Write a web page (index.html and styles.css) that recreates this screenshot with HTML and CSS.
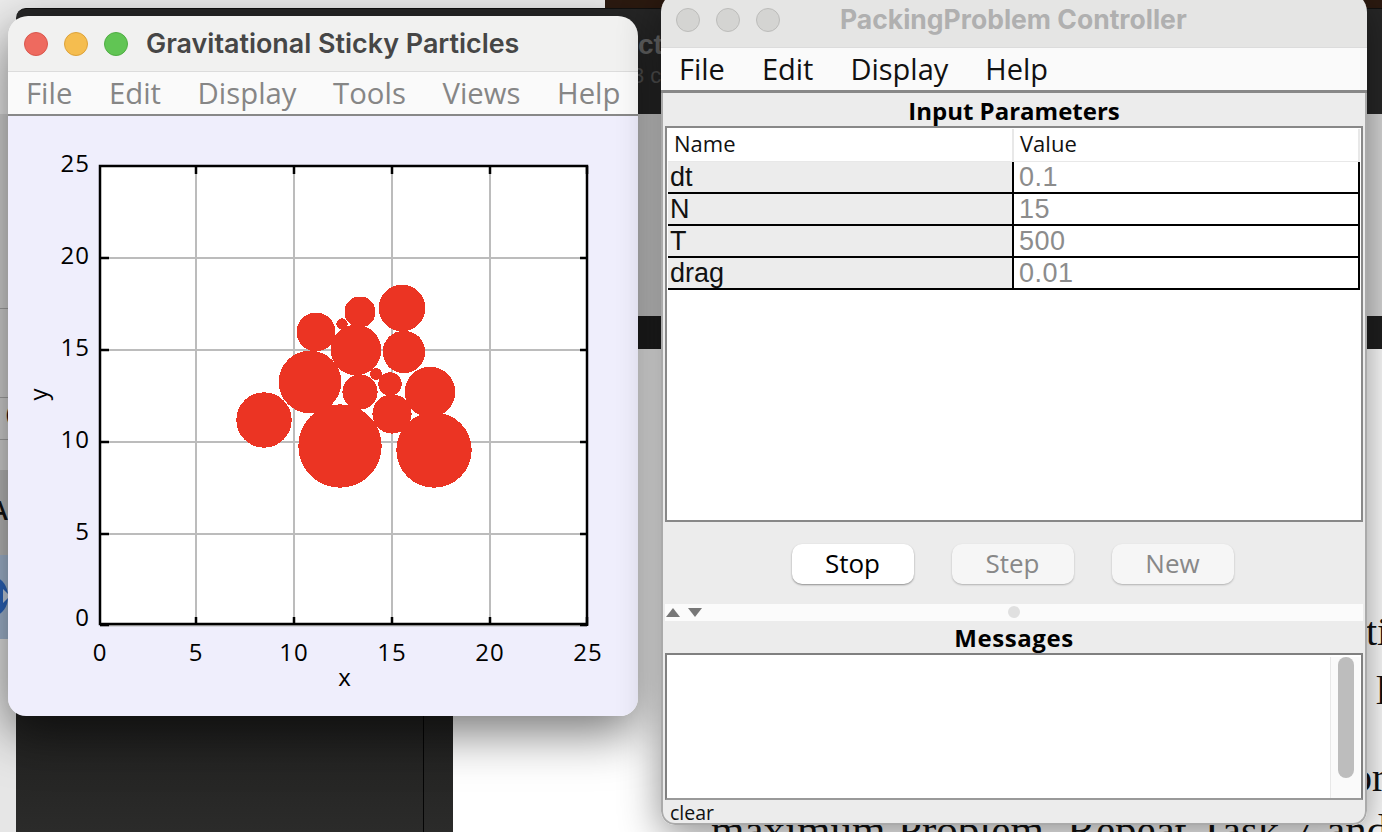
FILE: index.html
```html
<!DOCTYPE html>
<html lang="en">
<head>
    <meta charset="UTF-8">
    <meta name="viewport" content="width=device-width, initial-scale=1.0">
    <title>Gravitational Sticky Particles</title>
    <link rel="stylesheet" href="styles.css">
</head>
<body>
    <!-- Desktop behind the two windows -->
    <div class="desk">
        <div class="bg-photo"></div>
        <div class="bg-dark-top"></div>
        <div class="bg-dark-lower"><div class="bg-divider"></div></div>
        <div class="bg-strip">
            <span class="strip-line strip-line-a"></span>
            <span class="strip-line strip-line-b"></span>
            <span class="strip-line strip-line-c"></span>
            <span class="strip-paren">(</span>
            <div class="strip-band"><span>A</span></div>
            <div class="strip-blue"><span class="strip-dot"></span><span class="strip-play"></span></div>
            <div class="strip-rest"></div>
        </div>
        <div class="bg-page"></div>
        <div class="bg-upper"></div>
        <div class="bg-bar"></div>
        <span class="bg-faint bg-faint-a">ct</span>
        <span class="bg-faint bg-faint-b">3 c</span>
        <span class="bg-serif bg-serif-a">ti</span>
        <span class="bg-serif bg-serif-b">l</span>
        <span class="bg-serif bg-serif-c">or</span>
        <span class="bg-serif bg-serif-d">maximum Problem. Repeat Task 7 and</span>
    </div>

    <!-- Plot window -->
    <section class="window plot-window">
        <header class="titlebar">
            <span class="light light-red"></span>
            <span class="light light-yellow"></span>
            <span class="light light-green"></span>
            <h1 class="title">Gravitational Sticky Particles</h1>
        </header>
        <nav class="menubar menubar-inactive">
            <span>File</span><span>Edit</span><span>Display</span><span>Tools</span><span>Views</span><span>Help</span>
        </nav>
        <div class="plot-panel">
            <svg class="plot" viewBox="8 116 630 600" width="630" height="600">
                <rect x="100" y="166" width="487" height="458" fill="#fff"/>
                <g class="grid">
                    <path d="M196 166V624M294 166V624M392 166V624M490 166V624"/>
                    <path d="M100 258H587M100 350H587M100 442H587M100 534H587"/>
                    <path d="M100 625.5H587"/>
                </g>
                <g class="particles">
                    <circle cx="264" cy="420" r="27.7"/>
                    <circle cx="340" cy="446" r="41.7"/>
                    <circle cx="434" cy="450" r="37.7"/>
                    <circle cx="310" cy="382" r="31.3"/>
                    <circle cx="356" cy="350" r="25.3"/>
                    <circle cx="316" cy="332" r="19.4"/>
                    <circle cx="360" cy="312" r="15.5"/>
                    <circle cx="402" cy="308" r="23.3"/>
                    <circle cx="404" cy="352" r="21.3"/>
                    <circle cx="430" cy="392" r="25.3"/>
                    <circle cx="360" cy="392" r="17.6"/>
                    <circle cx="390" cy="384" r="11.7"/>
                    <circle cx="392" cy="414" r="19.6"/>
                    <circle cx="342" cy="324" r="5.7"/>
                    <circle cx="376" cy="374" r="6"/>
                </g>
                <g class="axes">
                    <rect x="100" y="166" width="487" height="458"/>
                    <path d="M196 166v8M294 166v8M392 166v8M490 166v8M587 166v8"/>
                    <path d="M196 624v-7M294 624v-7M392 624v-7M490 624v-7M587 626v-9"/>
                    <path d="M100 258h9M100 350h9M100 442h9M100 534h9M100 625h9"/>
                    <path d="M587 258h-7M587 350h-7M587 442h-7M587 534h-7M587 625h-7"/>
                </g>
                <g class="ticks ticks-y">
                    <text x="90" y="172">25</text>
                    <text x="90" y="264">20</text>
                    <text x="90" y="356">15</text>
                    <text x="90" y="448">10</text>
                    <text x="90" y="540">5</text>
                    <text x="90" y="626">0</text>
                </g>
                <g class="ticks ticks-x">
                    <text x="100" y="661">0</text>
                    <text x="196" y="661">5</text>
                    <text x="294" y="661">10</text>
                    <text x="392" y="661">15</text>
                    <text x="490" y="661">20</text>
                    <text x="588" y="661">25</text>
                    <text x="345" y="686">x</text>
                    <text transform="translate(47 394) rotate(-90)">y</text>
                </g>
            </svg>
        </div>
    </section>

    <!-- Controller window -->
    <section class="window controller-window">
        <header class="titlebar titlebar-inactive">
            <span class="light"></span>
            <span class="light"></span>
            <span class="light"></span>
            <h1 class="title">PackingProblem Controller</h1>
        </header>
        <nav class="menubar">
            <span>File</span><span>Edit</span><span>Display</span><span>Help</span>
        </nav>
        <div class="controller-body">
            <h2 class="panel-title">Input Parameters</h2>
            <div class="table-box">
                <table class="params">
                    <thead>
                        <tr><th>Name</th><th>Value</th></tr>
                    </thead>
                    <tbody>
                        <tr><td>dt</td><td>0.1</td></tr>
                        <tr><td>N</td><td>15</td></tr>
                        <tr><td>T</td><td>500</td></tr>
                        <tr><td>drag</td><td>0.01</td></tr>
                    </tbody>
                </table>
            </div>
            <div class="buttons">
                <button class="btn btn-active">Stop</button>
                <button class="btn">Step</button>
                <button class="btn">New</button>
            </div>
            <div class="splitter">
                <span class="tri tri-up"></span>
                <span class="tri tri-down"></span>
                <span class="grip"></span>
            </div>
            <h2 class="panel-title panel-title-messages">Messages</h2>
            <div class="messages">
                <div class="scroll-track"><div class="scroll-thumb"></div></div>
            </div>
            <div class="statusbar">clear</div>
        </div>
    </section>
</body>
</html>
```

FILE: styles.css
```css
html, body {
    margin: 0;
    padding: 0;
    height: 100%;
    overflow: hidden;
}
body {
    position: relative;
    width: 1382px;
    height: 832px;
    background-color: #ececec;
    font-family: "Open Sans", "Noto Sans", sans-serif;
}

/* desktop behind the windows */
.desk {
    position: absolute;
    inset: 0;
    overflow: hidden;
}
.bg-photo {
    position: absolute;
    left: 605px;
    top: 0;
    width: 777px;
    height: 10px;
    background-color: #2c1a10;
}
.bg-dark-top {
    position: absolute;
    left: 16px;
    top: 8px;
    width: 1366px;
    height: 106px;
    background-color: #272727;
    border-radius: 10px 0 0 0;
    border-top: 1px solid #111;
}
.bg-dark-lower {
    position: absolute;
    left: 16px;
    top: 700px;
    width: 437px;
    height: 132px;
    background: linear-gradient(#1f1f1e, #2b2b2a);
}
.bg-divider {
    position: absolute;
    left: 407px;
    top: 0;
    width: 1px;
    height: 132px;
    background-color: #050505;
}
.bg-strip {
    position: absolute;
    left: 0;
    top: 114px;
    width: 16px;
    height: 718px;
    background-color: #d6d6d6;
}
.strip-line {
    position: absolute;
    left: 0;
    width: 16px;
    height: 1px;
    background-color: #a6a6a6;
}
.strip-line-a { top: 194px; }
.strip-line-b { top: 283px; }
.strip-line-c { top: 325px; }
.strip-paren {
    position: absolute;
    left: 6px;
    top: 284px;
    font-size: 22px;
    color: #111;
}
.strip-band {
    position: absolute;
    left: 0;
    top: 356px;
    width: 16px;
    height: 85px;
    background-color: #bcbcbc;
    font-size: 27px;
    font-weight: 600;
    color: #111;
    overflow: hidden;
}
.strip-band span {
    position: absolute;
    left: -10px;
    top: 21px;
}
.strip-blue {
    position: absolute;
    left: 0;
    top: 441px;
    width: 16px;
    height: 84px;
    background-color: #a4b8d2;
    overflow: hidden;
}
.strip-dot {
    position: absolute;
    left: -18px;
    top: 23px;
    width: 26px;
    height: 37px;
    border-radius: 50%;
    background-color: #2c66c0;
}
.strip-play {
    position: absolute;
    left: 3px;
    top: 34px;
    width: 0;
    height: 0;
    border-left: 7px solid #c9d4e4;
    border-top: 7px solid transparent;
    border-bottom: 7px solid transparent;
}
.strip-rest {
    position: absolute;
    left: 0;
    top: 525px;
    width: 16px;
    height: 193px;
    background-color: #e6e6e6;
}
.bg-page {
    position: absolute;
    left: 453px;
    top: 114px;
    width: 929px;
    height: 718px;
    background-color: #fff;
}
.bg-upper {
    position: absolute;
    left: 600px;
    top: 114px;
    width: 782px;
    height: 202px;
    background-color: #d8d8d8;
}
.bg-bar {
    position: absolute;
    left: 600px;
    top: 316px;
    width: 782px;
    height: 33px;
    background-color: #1f1f1f;
}
.bg-faint {
    position: absolute;
    font-family: "Liberation Sans", sans-serif;
    color: #6a6a6a;
    white-space: nowrap;
}
.bg-faint-a {
    left: 638px;
    top: 31px;
    font-size: 28px;
    line-height: 28px;
    font-weight: 700;
}
.bg-faint-b {
    left: 632px;
    top: 65px;
    font-size: 22px;
    line-height: 22px;
    color: #555;
}
.bg-serif {
    position: absolute;
    font-family: "Liberation Serif", serif;
    font-size: 40px;
    color: #111;
    white-space: nowrap;
}
.bg-serif-a { left: 1366px; top: 608px; }
.bg-serif-b { left: 1376px; top: 667px; }
.bg-serif-c { left: 1352px; top: 754px; }
.bg-serif-d {
    left: 711px;
    top: 805px;
    font-size: 43px;
    word-spacing: 2px;
}

/* windows */
.window {
    position: absolute;
    display: flex;
    flex-direction: column;
    overflow: hidden;
    box-shadow: 0 10px 40px rgba(0, 0, 0, 0.45);
}
.plot-window {
    left: 8px;
    top: 16px;
    width: 630px;
    height: 700px;
    border-radius: 20px 20px 18px 18px;
    box-shadow: 0 16px 50px rgba(0, 0, 0, 0.55);
}
.controller-window {
    left: 661px;
    top: -8px;
    width: 706px;
    height: 833px;
    border-radius: 20px 20px 14px 14px;
}
.titlebar {
    display: flex;
    align-items: center;
    gap: 16px;
    flex: none;
    height: 56px;
    padding-left: 16px;
    background-color: #f1f1f0;
    border-bottom: 1px solid #dcdcdc;
    box-sizing: border-box;
}
.controller-window .titlebar {
    background-color: #e5e5e4;
    padding-left: 15px;
}
.light {
    width: 24px;
    height: 24px;
    flex: none;
    box-sizing: border-box;
    border-radius: 50%;
    background-color: #d4d4d2;
    border: 1px solid #bcbcba;
}
.light-red { background-color: #ee6a5f; border-color: #d9574d; }
.light-yellow { background-color: #f5bd4f; border-color: #dca23a; }
.light-green { background-color: #61c554; border-color: #50ad44; }
.title {
    margin: -2px 0 0 2px;
    font-family: Inter, "Noto Sans", sans-serif;
    font-size: 26.9px;
    font-weight: 600;
    color: #464646;
    white-space: nowrap;
}
.titlebar-inactive .title {
    margin-left: 44px;
    font-size: 26.5px;
    color: #b0b0b0;
    font-weight: 700;
}
.menubar {
    display: flex;
    flex: none;
    align-items: center;
    gap: 37px;
    height: 45px;
    padding: 0 0 2px 18px;
    background-color: #fafafa;
    border-bottom: 3px solid #888;
    box-sizing: border-box;
    font-size: 29px;
    color: #111;
}
.menubar-inactive {
    height: 44px;
    gap: 36.6px;
    padding: 0 0 0 18px;
    border-bottom-width: 2px;
    font-size: 29.3px;
    color: #868686;
}

/* plot */
.plot-panel {
    flex: 1;
    background-color: #efeefc;
}
.plot {
    display: block;
}
.grid path {
    fill: none;
    stroke: #bcbcbc;
    stroke-width: 2;
}
.particles circle {
    fill: #eb3423;
    shape-rendering: crispEdges;
}
.axes rect, .axes path {
    fill: none;
    stroke: #000;
    stroke-width: 2.5;
}
.ticks text {
    font-family: "Open Sans", sans-serif;
    font-size: 24px;
    letter-spacing: 1px;
    fill: #000;
}
.ticks-y text { text-anchor: end; }
.ticks-x text { text-anchor: middle; }

/* controller */
.controller-body {
    display: flex;
    flex-direction: column;
    flex: 1;
    min-height: 0;
    background-color: #ececec;
    border: 2px solid #aaa;
    border-top: 0;
    border-radius: 0 0 14px 14px;
    padding: 0 2px;
}
.panel-title {
    margin: 0;
    flex: none;
    height: 33px;
    line-height: 35px;
    text-align: center;
    font-size: 24px;
    font-weight: 700;
    color: #000;
}
.table-box {
    flex: none;
    height: 396px;
    box-sizing: border-box;
    background-color: #fff;
    border: 2px solid #888;
    padding: 1px 3px 0 1px;
}
.params {
    width: 692px;
    border-collapse: collapse;
    table-layout: fixed;
    font-family: "Liberation Sans", sans-serif;
    font-size: 27px;
}
.params th {
    height: 28px;
    padding: 0 0 4px 6px;
    text-align: left;
    font-family: "Open Sans", sans-serif;
    font-size: 22px;
    line-height: 28px;
    font-weight: 400;
    color: #111;
    border-bottom: 1px solid #e8e8e8;
    border-right: 2px solid #e8e8e8;
}
.params td {
    height: 30px;
    padding: 0 0 0 2px;
    line-height: 30px;
    color: #111;
    background-color: #ececec;
    border-bottom: 2px solid #000;
    border-right: 2px solid #000;
}
.params td + td {
    padding-left: 5px;
    background-color: #fff;
    letter-spacing: 0.5px;
    color: #8c8c8c;
}
.params th:first-child, .params td:first-child {
    width: 338px;
}
.buttons {
    display: flex;
    flex: none;
    justify-content: center;
    gap: 38px;
    height: 82px;
    padding: 22px 3px 0 0;
    box-sizing: border-box;
}
.btn {
    width: 122px;
    height: 40px;
    padding: 0 0 3px;
    border: 0;
    border-radius: 10px;
    background-color: #f6f6f6;
    box-shadow: 0 1px 2px rgba(0, 0, 0, 0.25);
    font-family: inherit;
    font-size: 26px;
    color: #888;
}
.btn-active {
    background-color: #fff;
    color: #000;
    box-shadow: 0 1px 2px rgba(0, 0, 0, 0.4);
}
.splitter {
    position: relative;
    display: flex;
    flex: none;
    align-items: center;
    gap: 8px;
    height: 17px;
    padding-left: 1px;
    background-color: #fbfbfb;
}
.tri {
    width: 0;
    height: 0;
    border-left: 7px solid transparent;
    border-right: 7px solid transparent;
}
.tri-up { border-bottom: 9px solid #777; }
.tri-down { border-top: 9px solid #777; }
.grip {
    position: absolute;
    left: 343px;
    top: 2px;
    width: 12px;
    height: 12px;
    border-radius: 50%;
    background-color: #e0e0e0;
}
.panel-title-messages {
    height: 32px;
    line-height: 33px;
    letter-spacing: 0.6px;
}
.messages {
    display: flex;
    flex: none;
    justify-content: flex-end;
    height: 147px;
    box-sizing: border-box;
    background-color: #fff;
    border: 2px solid #808080;
    border-bottom-color: #999;
    padding: 2px 1px 0 0;
}
.scroll-track {
    width: 30px;
    box-sizing: border-box;
    padding: 0 6px 0 7px;
    background-color: #fafafa;
    border-left: 1px solid #e8e8e8;
}
.scroll-thumb {
    height: 121px;
    border-radius: 8px;
    background-color: #bdbdbd;
}
.statusbar {
    flex: 1;
    padding: 0 0 0 5px;
    line-height: 25px;
    font-size: 19.5px;
    color: #111;
}
```
